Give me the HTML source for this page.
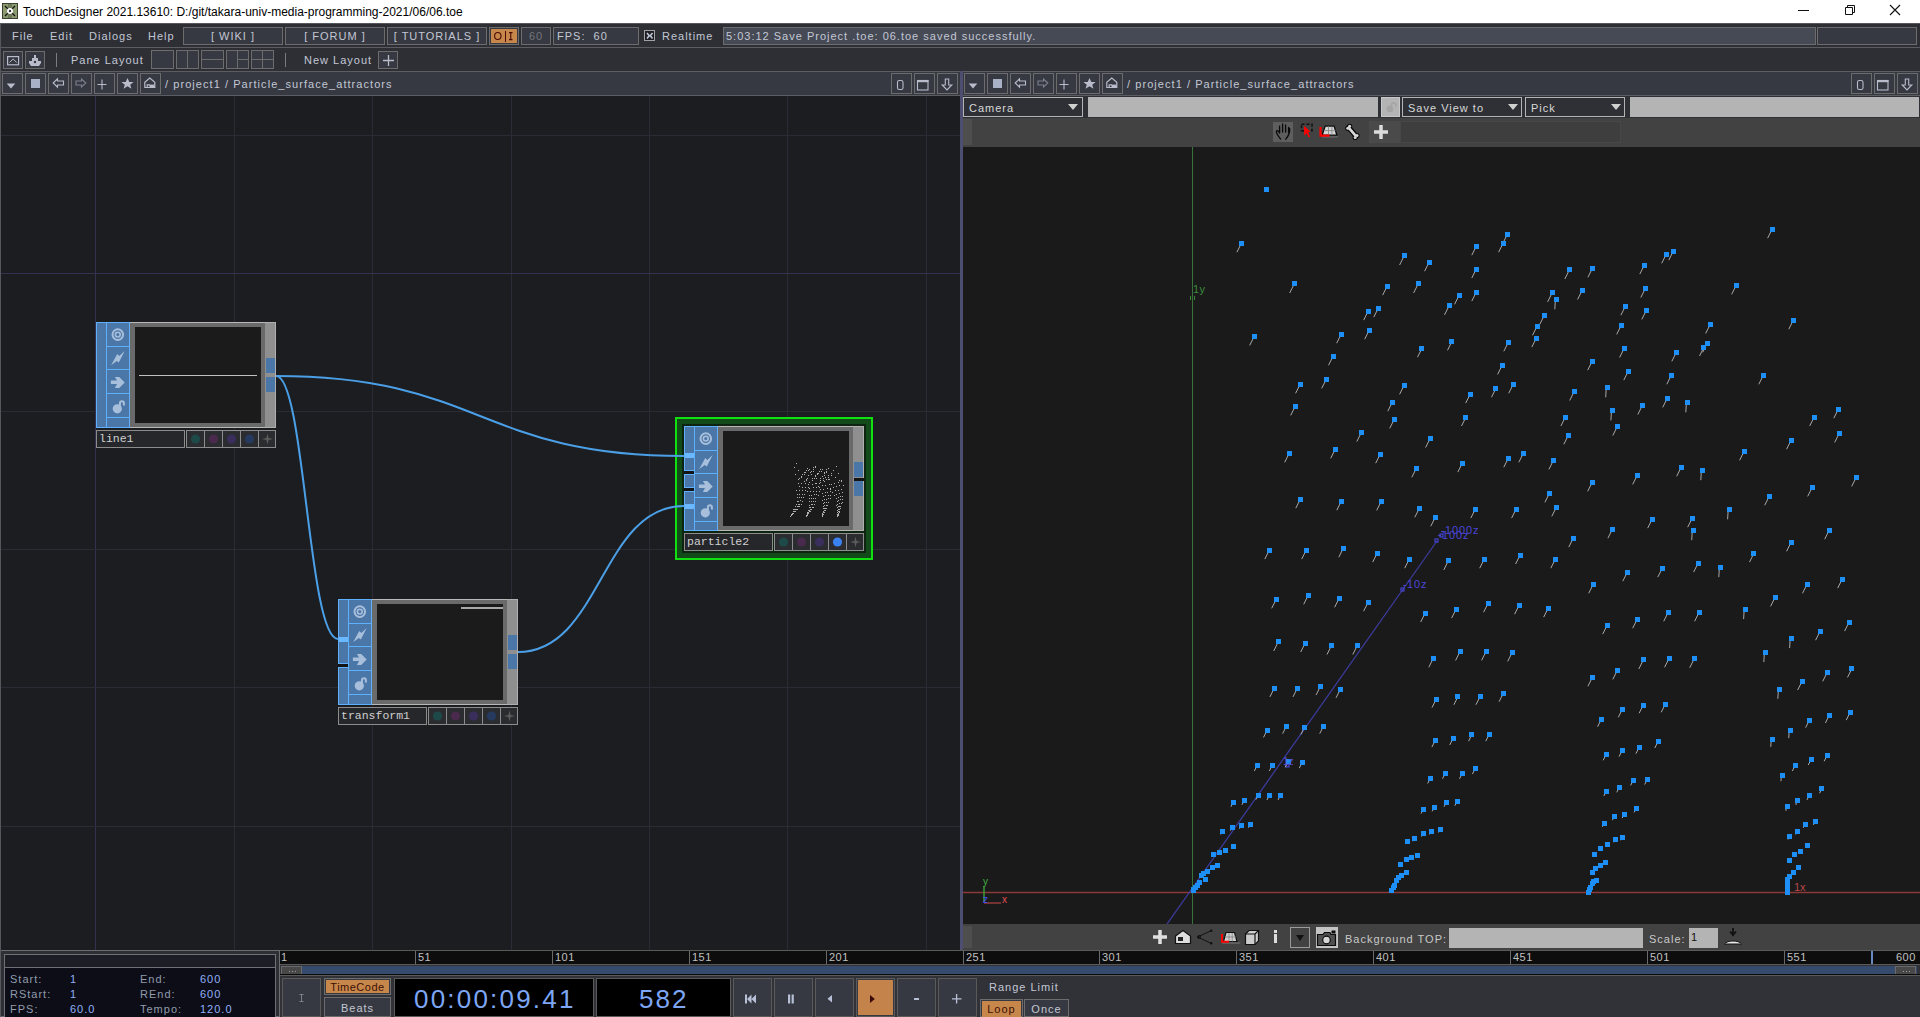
<!DOCTYPE html><html><head><meta charset="utf-8"><style>
*{margin:0;padding:0;box-sizing:border-box}
html,body{width:1920px;height:1017px;overflow:hidden;background:#1c1d21;font-family:"Liberation Sans",sans-serif;position:relative}
.a{position:absolute}
.t{position:absolute;white-space:nowrap;line-height:1}
.btn{position:absolute;border:1px solid #6c6c6c;background:#363941}
.txt{color:#c3c7d4;font-size:11px;letter-spacing:1px}
svg{position:absolute;overflow:visible}
</style></head><body><div class="a" style="left:0px;top:0px;width:1920px;height:23px;background:#fff"></div>
<svg style="left:2px;top:3px" width="16" height="16"><rect x="0.5" y="0.5" width="15" height="15" fill="#8c9a70" stroke="#3a4030"/><rect x="6" y="1" width="4" height="14" fill="#6e7a58"/><path d="M3 3L13 13M13 3L3 13" stroke="#111" stroke-width="1.3"/><circle cx="8" cy="8" r="3" fill="#fff"/><circle cx="8" cy="8" r="1.2" fill="#333"/></svg>
<div class="t " style="left:23px;top:6px;font-size:12px;color:#000;letter-spacing:0">TouchDesigner 2021.13610: D:/git/takara-univ-media-programming-2021/06/06.toe</div>
<svg style="left:1798px;top:10px" width="12" height="2"><rect width="11" height="1" fill="#111"/></svg>
<svg style="left:1843px;top:4px" width="12" height="12"><path d="M2.5 3.5h7v7h-7z M4.5 3.5V1.5h7v7h-2" fill="none" stroke="#111"/></svg>
<svg style="left:1889px;top:4px" width="12" height="12"><path d="M1 1L11 11M11 1L1 11" stroke="#111" stroke-width="1.1"/></svg>
<div class="a" style="left:0px;top:23px;width:1920px;height:24px;background:#2d2f35;border-top:1px solid #55575c"></div>
<div class="t txt" style="left:12px;top:31px;">File</div>
<div class="t txt" style="left:50px;top:31px;">Edit</div>
<div class="t txt" style="left:89px;top:31px;">Dialogs</div>
<div class="t txt" style="left:148px;top:31px;">Help</div>
<div class="btn" style="left:183px;top:27px;width:100px;height:18px;"><div class="t txt" style="left:0;width:98px;text-align:center;top:3px">[ WIKI ]</div></div>
<div class="btn" style="left:285px;top:27px;width:100px;height:18px;"><div class="t txt" style="left:0;width:98px;text-align:center;top:3px">[ FORUM ]</div></div>
<div class="btn" style="left:387px;top:27px;width:100px;height:18px;"><div class="t txt" style="left:0;width:98px;text-align:center;top:3px">[ TUTORIALS ]</div></div>
<div class="btn" style="left:489px;top:27px;width:30px;height:18px;"><div class="a" style="left:1px;top:1px;width:26px;height:14px;background:#c8874a"></div><svg style="left:4px;top:4px" width="9" height="10"><ellipse cx="3.8" cy="4" rx="3.2" ry="3.5" fill="none" stroke="#4a0a06" stroke-width="1.1"/></svg><div class="a" style="left:15px;top:3px;width:1px;height:11px;background:#4a0a06"></div><svg style="left:19px;top:4px" width="6" height="10"><path d="M0 0.6H3.5M1.75 0.6V7.6M0 7.6H3.5" stroke="#4a0a06" stroke-width="1.1"/></svg></div>
<div class="btn" style="left:521px;top:27px;width:30px;height:18px;"><div class="t txt" style="left:0;width:28px;text-align:center;top:3px;color:#72757c">60</div></div>
<div class="btn" style="left:553px;top:27px;width:86px;height:18px;"><div class="t txt" style="left:3px;top:3px">FPS:&nbsp;&nbsp;60</div></div>
<div class="a" style="left:644px;top:30px;width:11px;height:11px;border:1px solid #a0a2a8;background:#1e1f23"><svg style="left:1px;top:1px" width="8" height="8"><path d="M1 1L3 3.5H4.5L6.5 1M1 6.5L3 4H4.5L6.5 6.5" fill="none" stroke="#c0c6d8" stroke-width="1.6"/></svg></div>
<div class="t txt" style="left:662px;top:31px;">Realtime</div>
<div class="btn" style="left:723px;top:27px;width:1093px;height:18px;background:#464a55"><div class="t txt" style="left:2px;top:3px">5:03:12 Save Project .toe: 06.toe saved successfully.</div></div>
<div class="btn" style="left:1817px;top:27px;width:100px;height:18px;background:#363941"></div>
<div class="a" style="left:0px;top:47px;width:1920px;height:25px;background:#2d2f35;border-top:1px solid #5b5d62"></div>
<div class="btn" style="left:3px;top:51px;width:20px;height:18px;"><svg style="left:3px;top:4px" width="14" height="12"><rect x="0.6" y="0.6" width="11" height="8.2" fill="none" stroke="#b8bccb" stroke-width="1.2"/><path d="M2.5 6.5L6.1 3L9.7 6.5" fill="none" stroke="#b8bccb" stroke-width="1"/></svg></div>
<div class="btn" style="left:25px;top:51px;width:20px;height:18px;"><svg style="left:2px;top:2px" width="14" height="13"><path d="M6 1h2v3h2v3h3v2l-2 3H3L1 9V7h3V4h2z" fill="#b8bccb"/><circle cx="7" cy="8" r="1.2" fill="#363941"/></svg></div>
<div class="a" style="left:56px;top:53px;width:1px;height:14px;background:#7a7c84"></div>
<div class="t txt" style="left:71px;top:55px;">Pane Layout</div>
<div class="btn" style="left:151px;top:50px;width:23px;height:19px;"></div>
<div class="btn" style="left:176px;top:50px;width:23px;height:19px;"><div class="a" style="left:10px;top:0;width:1px;height:17px;background:#6c6c6c"></div></div>
<div class="btn" style="left:201px;top:50px;width:23px;height:19px;"><div class="a" style="left:0;top:8px;width:21px;height:1px;background:#6c6c6c"></div></div>
<div class="btn" style="left:226px;top:50px;width:23px;height:19px;"><div class="a" style="left:10px;top:0;width:1px;height:17px;background:#6c6c6c"></div><div class="a" style="left:10px;top:8px;width:11px;height:1px;background:#6c6c6c"></div></div>
<div class="btn" style="left:251px;top:50px;width:23px;height:19px;"><div class="a" style="left:10px;top:0;width:1px;height:17px;background:#6c6c6c"></div><div class="a" style="left:0;top:8px;width:21px;height:1px;background:#6c6c6c"></div></div>
<div class="a" style="left:285px;top:53px;width:1px;height:14px;background:#7a7c84"></div>
<div class="t txt" style="left:304px;top:55px;">New Layout</div>
<div class="btn" style="left:378px;top:51px;width:20px;height:18px;"><svg style="left:3px;top:2px" width="13" height="13"><path d="M6.5 1v11M1 6.5h11" stroke="#b8bccb" stroke-width="1.3"/></svg></div>
<div class="a" style="left:0px;top:71px;width:960px;height:25px;background:#363942;border-top:1px solid #5b5d62;border-bottom:1px solid #5b5d62"></div>
<div class="btn" style="left:2px;top:73px;width:21px;height:21px;"><svg style="left:2px;top:8px" width="12" height="8"><path d="M1.7 1.5h8.6L6 6.5z" fill="#b8bccb"/></svg></div>
<div class="btn" style="left:25px;top:73px;width:21px;height:21px;"><div class="a" style="left:5px;top:5px;width:9px;height:9px;background:#a9b1c6"></div></div>
<div class="btn" style="left:48px;top:73px;width:21px;height:21px;"><svg style="left:3px;top:4px" width="14" height="12"><path d="M1.2 5L5.5 0.8V3H11.5V7H5.5V9.2Z" fill="none" stroke="#b8bccb" stroke-width="1.1"/></svg></div>
<div class="btn" style="left:71px;top:73px;width:21px;height:21px;"><svg style="left:3px;top:4px" width="14" height="12"><path d="M10.8 5L6.5 1V3H1V7H6.5V9Z" fill="none" stroke="#7c8090" stroke-width="1.1"/></svg></div>
<div class="btn" style="left:94px;top:73px;width:21px;height:21px;"><svg style="left:2px;top:5px" width="12" height="12"><path d="M5 0.5v10M0.5 5.5h9" stroke="#b8bccb" stroke-width="1.1"/></svg></div>
<div class="btn" style="left:117px;top:73px;width:21px;height:21px;"><svg style="left:3px;top:3px" width="14" height="14"><path d="M6.5 1L8.3 5H12.6L9.2 7.7L10.5 11.8L6.5 9.3L2.5 11.8L3.8 7.7L0.4 5H4.7Z" fill="#b8bccb"/></svg></div>
<div class="btn" style="left:140px;top:73px;width:21px;height:21px;"><svg style="left:3px;top:3px" width="14" height="14"><path d="M0.8 5.2L5.8 1L10.8 5.2V10.5H0.8Z M3.2 10.5V7.8H6" fill="none" stroke="#b8bccb" stroke-width="1.2"/><rect x="5.5" y="7.6" width="5" height="2.8" fill="#b8bccb"/></svg></div>
<div class="t txt" style="left:165px;top:79px;letter-spacing:1.06px">/ project1 / Particle_surface_attractors</div>
<div class="btn" style="left:891px;top:73px;width:21px;height:21px;"><svg style="left:5px;top:6px" width="8" height="11"><rect x="0.5" y="0.5" width="5.5" height="9" rx="1.8" fill="none" stroke="#b8bccb" stroke-width="1.1"/></svg></div>
<div class="btn" style="left:914px;top:73px;width:21px;height:21px;"><svg style="left:2px;top:6px" width="13" height="12"><rect x="0.5" y="0.5" width="10.5" height="9.5" fill="none" stroke="#b8bccb" stroke-width="1.1"/><rect x="0" y="0" width="11.5" height="2.2" fill="#b8bccb"/></svg></div>
<div class="btn" style="left:937px;top:73px;width:21px;height:21px;"><svg style="left:4px;top:4px" width="12" height="14"><path d="M3.3 1H6.7V7H9.8L5 12L0.2 7H3.3Z" fill="none" stroke="#b8bccb" stroke-width="1.1"/></svg></div>
<div class="a" style="left:962px;top:71px;width:958px;height:25px;background:#363942;border-top:1px solid #5b5d62;border-bottom:1px solid #5b5d62"></div>
<div class="btn" style="left:964px;top:73px;width:21px;height:21px;"><svg style="left:2px;top:8px" width="12" height="8"><path d="M1.7 1.5h8.6L6 6.5z" fill="#b8bccb"/></svg></div>
<div class="btn" style="left:987px;top:73px;width:21px;height:21px;"><div class="a" style="left:5px;top:5px;width:9px;height:9px;background:#a9b1c6"></div></div>
<div class="btn" style="left:1010px;top:73px;width:21px;height:21px;"><svg style="left:3px;top:4px" width="14" height="12"><path d="M1.2 5L5.5 0.8V3H11.5V7H5.5V9.2Z" fill="none" stroke="#b8bccb" stroke-width="1.1"/></svg></div>
<div class="btn" style="left:1033px;top:73px;width:21px;height:21px;"><svg style="left:3px;top:4px" width="14" height="12"><path d="M10.8 5L6.5 1V3H1V7H6.5V9Z" fill="none" stroke="#7c8090" stroke-width="1.1"/></svg></div>
<div class="btn" style="left:1056px;top:73px;width:21px;height:21px;"><svg style="left:2px;top:5px" width="12" height="12"><path d="M5 0.5v10M0.5 5.5h9" stroke="#b8bccb" stroke-width="1.1"/></svg></div>
<div class="btn" style="left:1079px;top:73px;width:21px;height:21px;"><svg style="left:3px;top:3px" width="14" height="14"><path d="M6.5 1L8.3 5H12.6L9.2 7.7L10.5 11.8L6.5 9.3L2.5 11.8L3.8 7.7L0.4 5H4.7Z" fill="#b8bccb"/></svg></div>
<div class="btn" style="left:1102px;top:73px;width:21px;height:21px;"><svg style="left:3px;top:3px" width="14" height="14"><path d="M0.8 5.2L5.8 1L10.8 5.2V10.5H0.8Z M3.2 10.5V7.8H6" fill="none" stroke="#b8bccb" stroke-width="1.2"/><rect x="5.5" y="7.6" width="5" height="2.8" fill="#b8bccb"/></svg></div>
<div class="t txt" style="left:1127px;top:79px;letter-spacing:1.06px">/ project1 / Particle_surface_attractors</div>
<div class="btn" style="left:1851px;top:73px;width:21px;height:21px;"><svg style="left:5px;top:6px" width="8" height="11"><rect x="0.5" y="0.5" width="5.5" height="9" rx="1.8" fill="none" stroke="#b8bccb" stroke-width="1.1"/></svg></div>
<div class="btn" style="left:1874px;top:73px;width:21px;height:21px;"><svg style="left:2px;top:6px" width="13" height="12"><rect x="0.5" y="0.5" width="10.5" height="9.5" fill="none" stroke="#b8bccb" stroke-width="1.1"/><rect x="0" y="0" width="11.5" height="2.2" fill="#b8bccb"/></svg></div>
<div class="btn" style="left:1897px;top:73px;width:21px;height:21px;"><svg style="left:4px;top:4px" width="12" height="14"><path d="M3.3 1H6.7V7H9.8L5 12L0.2 7H3.3Z" fill="none" stroke="#b8bccb" stroke-width="1.1"/></svg></div>
<div class="a" style="left:960px;top:71px;width:3px;height:879px;background:#4e4e70"></div>
<div class="a" style="left:0;top:96px;width:960px;height:854px;background:#1c1d21;overflow:hidden">
<div class="a" style="left:95px;top:0px;width:1px;height:854px;background:#30324f"></div>
<div class="a" style="left:234px;top:0px;width:1px;height:854px;background:#2a2b34"></div>
<div class="a" style="left:372px;top:0px;width:1px;height:854px;background:#2a2b34"></div>
<div class="a" style="left:511px;top:0px;width:1px;height:854px;background:#2a2b34"></div>
<div class="a" style="left:649px;top:0px;width:1px;height:854px;background:#2a2b34"></div>
<div class="a" style="left:787px;top:0px;width:1px;height:854px;background:#2a2b34"></div>
<div class="a" style="left:926px;top:0px;width:1px;height:854px;background:#2a2b34"></div>
<div class="a" style="left:0px;top:39px;width:960px;height:1px;background:#2a2b34"></div>
<div class="a" style="left:0px;top:177px;width:960px;height:1px;background:#30324f"></div>
<div class="a" style="left:0px;top:315px;width:960px;height:1px;background:#2a2b34"></div>
<div class="a" style="left:0px;top:453px;width:960px;height:1px;background:#2a2b34"></div>
<div class="a" style="left:0px;top:591px;width:960px;height:1px;background:#2a2b34"></div>
<div class="a" style="left:0px;top:730px;width:960px;height:1px;background:#2a2b34"></div>
</div>
<div class="a" style="left:675px;top:417px;width:198px;height:143px;border:2px solid #10e010;background:#134a1a"></div>
<div class="a" style="left:682px;top:424px;width:184px;height:129px;background:#0d2410"></div>
<svg style="left:0;top:0" width="960" height="950"><g fill="none" stroke="#4b9fe6" stroke-width="2"><path d="M276 376C480 376 480 456 684 456"/><path d="M276 376C305 376 308 639 338 639"/><path d="M518 652C601 652 601 506 684 506"/></g></svg>
<div class="a" style="left:96px;top:322px;width:10px;height:106px;background:#4a76a8;border:1px solid #5fb0ff;border-right:none"></div>
<div class="a" style="left:106px;top:322px;width:24px;height:106px;background:#4a76a8;border:1px solid #5fb0ff"></div>
<div class="a" style="left:106px;top:346px;width:24px;height:1px;background:#5fb0ff"></div>
<div class="a" style="left:106px;top:369px;width:24px;height:1px;background:#5fb0ff"></div>
<div class="a" style="left:106px;top:393px;width:24px;height:1px;background:#5fb0ff"></div>
<div class="a" style="left:106px;top:417px;width:24px;height:1px;background:#5fb0ff"></div>
<svg style="left:106px;top:322px" width="24" height="100"><circle cx="11.8" cy="12.6" r="5.3" fill="none" stroke="#a8bfdb" stroke-width="2"/><circle cx="11.8" cy="12.6" r="2.4" fill="none" stroke="#a8bfdb" stroke-width="1.6"/><path d="M5.1 43.2L11.25 32L13.3 34L18.7 29.1L12.8 40.6L10.7 38.9Z" fill="#a8bfdb"/><path d="M4.9 58.6H11L8.9 55.1H13.2L18.7 60.4L13.2 65.9H8.9L11 62.1H4.9Z" fill="#a8bfdb"/><circle cx="11.3" cy="86.8" r="4.6" fill="#a8bfdb"/><path d="M13.9 84V81.2A2 2 0 0 1 17.9 81.2V83.6" fill="none" stroke="#a8bfdb" stroke-width="2"/></svg>
<div class="a" style="left:130px;top:322px;width:135px;height:106px;background:#6a6a6a;border:1px solid #b8b8b8;border-left:none;border-right:none"></div>
<div class="a" style="left:135px;top:327px;width:126px;height:96px;background:#1b1b1b"></div>

<div class="a" style="left:265px;top:322px;width:11px;height:106px;background:#8f8f8f;border:1px solid #b0b0b0;border-left:none"></div>
<div class="a" style="left:96px;top:430px;width:89px;height:18px;background:#26272b;border:1px solid #8c8c8c"></div>
<div class="t " style="left:99px;top:433px;font-family:&quot;Liberation Mono&quot;,monospace;font-size:11.5px;color:#d0d0d0;letter-spacing:0">line1</div>
<div class="a" style="left:186px;top:430px;width:90px;height:18px;background:#2b2c30;border:1px solid #8c8c8c"></div>
<svg style="left:186px;top:430px" width="18" height="18"><circle cx="9.5" cy="9" r="4.6" fill="#1d4a48"/></svg>
<div class="a" style="left:204px;top:430px;width:1px;height:18px;background:#8c8c8c"></div>
<svg style="left:204px;top:430px" width="18" height="18"><circle cx="9.5" cy="9" r="4.6" fill="#4a2a4c"/></svg>
<div class="a" style="left:222px;top:430px;width:1px;height:18px;background:#8c8c8c"></div>
<svg style="left:222px;top:430px" width="18" height="18"><circle cx="9.5" cy="9" r="4.6" fill="#3a2f5c"/></svg>
<div class="a" style="left:240px;top:430px;width:1px;height:18px;background:#8c8c8c"></div>
<svg style="left:240px;top:430px" width="18" height="18"><circle cx="9.5" cy="9" r="4.6" fill="#263a60"/></svg>
<div class="a" style="left:258px;top:430px;width:1px;height:18px;background:#8c8c8c"></div>
<svg style="left:258px;top:430px" width="18" height="18"><path d="M9.5 3.5L10.6 7.9L15 9L10.6 10.1L9.5 14.5L8.4 10.1L4 9L8.4 7.9Z" fill="#5c5c5c"/></svg>
<div class="a" style="left:266px;top:358px;width:9px;height:15px;background:#4a76a8"></div>
<div class="a" style="left:266px;top:377px;width:9px;height:15px;background:#4a76a8"></div>
<div class="a" style="left:139px;top:375px;width:118px;height:1px;background:#c0c0c0"></div>
<div class="a" style="left:338px;top:599px;width:10px;height:106px;background:#4a76a8;border:1px solid #5fb0ff;border-right:none"></div>
<div class="a" style="left:339px;top:637px;width:10px;height:5px;background:#6ab8ff"></div>
<div class="a" style="left:338px;top:664px;width:11px;height:3px;background:#141414"></div>
<div class="a" style="left:338px;top:663px;width:11px;height:1px;background:#5fb0ff"></div>
<div class="a" style="left:338px;top:667px;width:11px;height:1px;background:#5fb0ff"></div>
<div class="a" style="left:348px;top:599px;width:24px;height:106px;background:#4a76a8;border:1px solid #5fb0ff"></div>
<div class="a" style="left:348px;top:623px;width:24px;height:1px;background:#5fb0ff"></div>
<div class="a" style="left:348px;top:646px;width:24px;height:1px;background:#5fb0ff"></div>
<div class="a" style="left:348px;top:670px;width:24px;height:1px;background:#5fb0ff"></div>
<div class="a" style="left:348px;top:694px;width:24px;height:1px;background:#5fb0ff"></div>
<svg style="left:348px;top:599px" width="24" height="100"><circle cx="11.8" cy="12.6" r="5.3" fill="none" stroke="#a8bfdb" stroke-width="2"/><circle cx="11.8" cy="12.6" r="2.4" fill="none" stroke="#a8bfdb" stroke-width="1.6"/><path d="M5.1 43.2L11.25 32L13.3 34L18.7 29.1L12.8 40.6L10.7 38.9Z" fill="#a8bfdb"/><path d="M4.9 58.6H11L8.9 55.1H13.2L18.7 60.4L13.2 65.9H8.9L11 62.1H4.9Z" fill="#a8bfdb"/><circle cx="11.3" cy="86.8" r="4.6" fill="#a8bfdb"/><path d="M13.9 84V81.2A2 2 0 0 1 17.9 81.2V83.6" fill="none" stroke="#a8bfdb" stroke-width="2"/></svg>
<div class="a" style="left:372px;top:599px;width:135px;height:106px;background:#6a6a6a;border:1px solid #b8b8b8;border-left:none;border-right:none"></div>
<div class="a" style="left:377px;top:604px;width:126px;height:96px;background:#1b1b1b"></div>

<div class="a" style="left:507px;top:599px;width:11px;height:106px;background:#8f8f8f;border:1px solid #b0b0b0;border-left:none"></div>
<div class="a" style="left:338px;top:707px;width:89px;height:18px;background:#26272b;border:1px solid #8c8c8c"></div>
<div class="t " style="left:341px;top:710px;font-family:&quot;Liberation Mono&quot;,monospace;font-size:11.5px;color:#d0d0d0;letter-spacing:0">transform1</div>
<div class="a" style="left:428px;top:707px;width:90px;height:18px;background:#2b2c30;border:1px solid #8c8c8c"></div>
<svg style="left:428px;top:707px" width="18" height="18"><circle cx="9.5" cy="9" r="4.6" fill="#1d4a48"/></svg>
<div class="a" style="left:446px;top:707px;width:1px;height:18px;background:#8c8c8c"></div>
<svg style="left:446px;top:707px" width="18" height="18"><circle cx="9.5" cy="9" r="4.6" fill="#4a2a4c"/></svg>
<div class="a" style="left:464px;top:707px;width:1px;height:18px;background:#8c8c8c"></div>
<svg style="left:464px;top:707px" width="18" height="18"><circle cx="9.5" cy="9" r="4.6" fill="#3a2f5c"/></svg>
<div class="a" style="left:482px;top:707px;width:1px;height:18px;background:#8c8c8c"></div>
<svg style="left:482px;top:707px" width="18" height="18"><circle cx="9.5" cy="9" r="4.6" fill="#263a60"/></svg>
<div class="a" style="left:500px;top:707px;width:1px;height:18px;background:#8c8c8c"></div>
<svg style="left:500px;top:707px" width="18" height="18"><path d="M9.5 3.5L10.6 7.9L15 9L10.6 10.1L9.5 14.5L8.4 10.1L4 9L8.4 7.9Z" fill="#5c5c5c"/></svg>
<div class="a" style="left:508px;top:635px;width:9px;height:15px;background:#4a76a8"></div>
<div class="a" style="left:508px;top:654px;width:9px;height:15px;background:#4a76a8"></div>
<div class="a" style="left:461px;top:607px;width:42px;height:2px;background:#a8a8a8"></div>
<div class="a" style="left:684px;top:426px;width:10px;height:105px;background:#4a76a8;border:1px solid #5fb0ff;border-right:none"></div>
<div class="a" style="left:685px;top:453px;width:10px;height:5px;background:#6ab8ff"></div>
<div class="a" style="left:684px;top:471px;width:11px;height:3px;background:#141414"></div>
<div class="a" style="left:684px;top:470px;width:11px;height:1px;background:#5fb0ff"></div>
<div class="a" style="left:684px;top:474px;width:11px;height:1px;background:#5fb0ff"></div>
<div class="a" style="left:684px;top:488px;width:11px;height:3px;background:#141414"></div>
<div class="a" style="left:684px;top:487px;width:11px;height:1px;background:#5fb0ff"></div>
<div class="a" style="left:684px;top:491px;width:11px;height:1px;background:#5fb0ff"></div>
<div class="a" style="left:685px;top:504px;width:10px;height:5px;background:#6ab8ff"></div>
<div class="a" style="left:694px;top:426px;width:24px;height:105px;background:#4a76a8;border:1px solid #5fb0ff"></div>
<div class="a" style="left:694px;top:450px;width:24px;height:1px;background:#5fb0ff"></div>
<div class="a" style="left:694px;top:473px;width:24px;height:1px;background:#5fb0ff"></div>
<div class="a" style="left:694px;top:497px;width:24px;height:1px;background:#5fb0ff"></div>
<div class="a" style="left:694px;top:521px;width:24px;height:1px;background:#5fb0ff"></div>
<svg style="left:694px;top:426px" width="24" height="100"><circle cx="11.8" cy="12.6" r="5.3" fill="none" stroke="#a8bfdb" stroke-width="2"/><circle cx="11.8" cy="12.6" r="2.4" fill="none" stroke="#a8bfdb" stroke-width="1.6"/><path d="M5.1 43.2L11.25 32L13.3 34L18.7 29.1L12.8 40.6L10.7 38.9Z" fill="#a8bfdb"/><path d="M4.9 58.6H11L8.9 55.1H13.2L18.7 60.4L13.2 65.9H8.9L11 62.1H4.9Z" fill="#a8bfdb"/><circle cx="11.3" cy="86.8" r="4.6" fill="#a8bfdb"/><path d="M13.9 84V81.2A2 2 0 0 1 17.9 81.2V83.6" fill="none" stroke="#a8bfdb" stroke-width="2"/></svg>
<div class="a" style="left:718px;top:426px;width:135px;height:105px;background:#6a6a6a;border:1px solid #b8b8b8;border-left:none;border-right:none"></div>
<div class="a" style="left:723px;top:431px;width:126px;height:95px;background:#1b1b1b"></div>

<div class="a" style="left:853px;top:426px;width:11px;height:105px;background:#8f8f8f;border:1px solid #b0b0b0;border-left:none"></div>
<div class="a" style="left:684px;top:533px;width:89px;height:18px;background:#26272b;border:1px solid #8c8c8c"></div>
<div class="t " style="left:687px;top:536px;font-family:&quot;Liberation Mono&quot;,monospace;font-size:11.5px;color:#d0d0d0;letter-spacing:0">particle2</div>
<div class="a" style="left:774px;top:533px;width:90px;height:18px;background:#2b2c30;border:1px solid #8c8c8c"></div>
<svg style="left:774px;top:533px" width="18" height="18"><circle cx="9.5" cy="9" r="4.6" fill="#1d4a48"/></svg>
<div class="a" style="left:792px;top:533px;width:1px;height:18px;background:#8c8c8c"></div>
<svg style="left:792px;top:533px" width="18" height="18"><circle cx="9.5" cy="9" r="4.6" fill="#4a2a4c"/></svg>
<div class="a" style="left:810px;top:533px;width:1px;height:18px;background:#8c8c8c"></div>
<svg style="left:810px;top:533px" width="18" height="18"><circle cx="9.5" cy="9" r="4.6" fill="#3a2f5c"/></svg>
<div class="a" style="left:828px;top:533px;width:1px;height:18px;background:#8c8c8c"></div>
<svg style="left:828px;top:533px" width="18" height="18"><circle cx="9.5" cy="9" r="4.6" fill="#3a82f0"/></svg>
<div class="a" style="left:846px;top:533px;width:1px;height:18px;background:#8c8c8c"></div>
<svg style="left:846px;top:533px" width="18" height="18"><path d="M9.5 3.5L10.6 7.9L15 9L10.6 10.1L9.5 14.5L8.4 10.1L4 9L8.4 7.9Z" fill="#5c5c5c"/></svg>
<div class="a" style="left:854px;top:462px;width:9px;height:15px;background:#4a76a8"></div>
<div class="a" style="left:854px;top:481px;width:9px;height:15px;background:#4a76a8"></div>
<div class="a" style="left:854px;top:478px;width:10px;height:3px;background:#141414"></div>
<svg style="left:723px;top:431px" width="126" height="96"><g fill="#b0b0b0"><rect x="73" y="32" width="1" height="1"/><rect x="71" y="36" width="1" height="1"/><rect x="92" y="35" width="1" height="1"/><rect x="92" y="36" width="1" height="1"/><rect x="90" y="36" width="1" height="1"/><rect x="84" y="37" width="1" height="1"/><rect x="86" y="38" width="1" height="1"/><rect x="90" y="38" width="1" height="1"/><rect x="75" y="39" width="1" height="1"/><rect x="83" y="39" width="1" height="1"/><rect x="85" y="39" width="1" height="1"/><rect x="88" y="40" width="1" height="1"/><rect x="90" y="40" width="1" height="1"/><rect x="87" y="41" width="1" height="1"/><rect x="81" y="41" width="1" height="1"/><rect x="82" y="41" width="1" height="1"/><rect x="72" y="43" width="1" height="1"/><rect x="79" y="43" width="1" height="1"/><rect x="81" y="43" width="1" height="1"/><rect x="88" y="43" width="1" height="1"/><rect x="85" y="44" width="1" height="1"/><rect x="92" y="44" width="1" height="1"/><rect x="94" y="42" width="1" height="1"/><rect x="94" y="43" width="1" height="1"/><rect x="78" y="45" width="1" height="1"/><rect x="92" y="45" width="1" height="1"/><rect x="76" y="47" width="1" height="1"/><rect x="78" y="46" width="1" height="1"/><rect x="84" y="47" width="1" height="1"/><rect x="93" y="47" width="1" height="1"/><rect x="91" y="47" width="1" height="1"/><rect x="89" y="47" width="1" height="1"/><rect x="75" y="48" width="1" height="1"/><rect x="83" y="48" width="1" height="1"/><rect x="89" y="49" width="1" height="1"/><rect x="83" y="49" width="1" height="1"/><rect x="113" y="35" width="1" height="1"/><rect x="105" y="37" width="1" height="1"/><rect x="97" y="38" width="1" height="1"/><rect x="99" y="38" width="1" height="1"/><rect x="103" y="38" width="1" height="1"/><rect x="96" y="40" width="1" height="1"/><rect x="98" y="40" width="1" height="1"/><rect x="103" y="40" width="1" height="1"/><rect x="110" y="39" width="1" height="1"/><rect x="95" y="42" width="1" height="1"/><rect x="101" y="41" width="1" height="1"/><rect x="103" y="41" width="1" height="1"/><rect x="101" y="42" width="1" height="1"/><rect x="108" y="42" width="1" height="1"/><rect x="115" y="42" width="1" height="1"/><rect x="108" y="44" width="1" height="1"/><rect x="101" y="44" width="1" height="1"/><rect x="105" y="44" width="1" height="1"/><rect x="99" y="45" width="1" height="1"/><rect x="102" y="46" width="1" height="1"/><rect x="105" y="46" width="1" height="1"/><rect x="112" y="46" width="1" height="1"/><rect x="97" y="47" width="1" height="1"/><rect x="100" y="47" width="1" height="1"/><rect x="105" y="48" width="1" height="1"/><rect x="106" y="48" width="1" height="1"/><rect x="103" y="48" width="1" height="1"/><rect x="100" y="49" width="1" height="1"/><rect x="97" y="49" width="1" height="1"/><rect x="116" y="49" width="1" height="1"/><rect x="118" y="49" width="1" height="1"/><rect x="81" y="50" width="1" height="1"/><rect x="86" y="51" width="1" height="1"/><rect x="75" y="52" width="1" height="1"/><rect x="78" y="52" width="1" height="1"/><rect x="82" y="52" width="1" height="1"/><rect x="85" y="53" width="1" height="1"/><rect x="89" y="53" width="1" height="1"/><rect x="92" y="52" width="1" height="1"/><rect x="93" y="52" width="1" height="1"/><rect x="76" y="55" width="1" height="1"/><rect x="79" y="56" width="1" height="1"/><rect x="82" y="56" width="1" height="1"/><rect x="85" y="56" width="1" height="1"/><rect x="86" y="57" width="1" height="1"/><rect x="90" y="56" width="1" height="1"/><rect x="93" y="56" width="1" height="1"/><rect x="73" y="59" width="1" height="1"/><rect x="76" y="59" width="1" height="1"/><rect x="79" y="59" width="1" height="1"/><rect x="82" y="59" width="1" height="1"/><rect x="84" y="60" width="1" height="1"/><rect x="87" y="60" width="1" height="1"/><rect x="90" y="60" width="1" height="1"/><rect x="93" y="60" width="1" height="1"/><rect x="74" y="63" width="1" height="1"/><rect x="76" y="63" width="1" height="1"/><rect x="79" y="63" width="1" height="1"/><rect x="81" y="63" width="1" height="1"/><rect x="86" y="64" width="1" height="1"/><rect x="88" y="64" width="1" height="1"/><rect x="91" y="63" width="1" height="1"/><rect x="93" y="63" width="1" height="1"/><rect x="74" y="66" width="1" height="1"/><rect x="76" y="66" width="1" height="1"/><rect x="78" y="66" width="1" height="1"/><rect x="80" y="66" width="1" height="1"/><rect x="86" y="67" width="1" height="1"/><rect x="88" y="67" width="1" height="1"/><rect x="90" y="67" width="1" height="1"/><rect x="92" y="67" width="1" height="1"/><rect x="101" y="50" width="1" height="1"/><rect x="97" y="51" width="1" height="1"/><rect x="118" y="50" width="1" height="1"/><rect x="115" y="51" width="1" height="1"/><rect x="111" y="52" width="1" height="1"/><rect x="96" y="52" width="1" height="1"/><rect x="106" y="53" width="1" height="1"/><rect x="108" y="53" width="1" height="1"/><rect x="102" y="54" width="1" height="1"/><rect x="99" y="54" width="1" height="1"/><rect x="120" y="54" width="1" height="1"/><rect x="116" y="54" width="1" height="1"/><rect x="95" y="55" width="1" height="1"/><rect x="113" y="55" width="1" height="1"/><rect x="96" y="56" width="1" height="1"/><rect x="110" y="56" width="1" height="1"/><rect x="104" y="57" width="1" height="1"/><rect x="107" y="57" width="1" height="1"/><rect x="100" y="58" width="1" height="1"/><rect x="107" y="58" width="1" height="1"/><rect x="118" y="58" width="1" height="1"/><rect x="97" y="58" width="1" height="1"/><rect x="115" y="59" width="1" height="1"/><rect x="112" y="59" width="1" height="1"/><rect x="96" y="60" width="1" height="1"/><rect x="107" y="60" width="1" height="1"/><rect x="104" y="61" width="1" height="1"/><rect x="109" y="61" width="1" height="1"/><rect x="102" y="61" width="1" height="1"/><rect x="99" y="62" width="1" height="1"/><rect x="119" y="61" width="1" height="1"/><rect x="116" y="62" width="1" height="1"/><rect x="113" y="63" width="1" height="1"/><rect x="95" y="64" width="1" height="1"/><rect x="111" y="64" width="1" height="1"/><rect x="105" y="64" width="1" height="1"/><rect x="107" y="64" width="1" height="1"/><rect x="102" y="64" width="1" height="1"/><rect x="100" y="65" width="1" height="1"/><rect x="119" y="65" width="1" height="1"/><rect x="117" y="65" width="1" height="1"/><rect x="115" y="66" width="1" height="1"/><rect x="113" y="67" width="1" height="1"/><rect x="103" y="68" width="1" height="1"/><rect x="105" y="67" width="1" height="1"/><rect x="107" y="67" width="1" height="1"/><rect x="74" y="70" width="1" height="1"/><rect x="75" y="70" width="1" height="1"/><rect x="77" y="69" width="1" height="1"/><rect x="79" y="70" width="1" height="1"/><rect x="73" y="73" width="1" height="1"/><rect x="75" y="73" width="1" height="1"/><rect x="76" y="73" width="1" height="1"/><rect x="78" y="73" width="1" height="1"/><rect x="72" y="75" width="1" height="1"/><rect x="74" y="75" width="1" height="1"/><rect x="75" y="75" width="1" height="1"/><rect x="76" y="75" width="1" height="1"/><rect x="70" y="78" width="1" height="1"/><rect x="71" y="78" width="1" height="1"/><rect x="72" y="78" width="1" height="1"/><rect x="73" y="78" width="1" height="1"/><rect x="74" y="78" width="1" height="1"/><rect x="70" y="80" width="1" height="1"/><rect x="71" y="80" width="1" height="1"/><rect x="72" y="80" width="1" height="1"/><rect x="69" y="82" width="1" height="1"/><rect x="70" y="82" width="1" height="1"/><rect x="68" y="84" width="1" height="1"/><rect x="68" y="83" width="1" height="1"/><rect x="69" y="83" width="1" height="1"/><rect x="67" y="85" width="1" height="1"/><rect x="86" y="70" width="1" height="1"/><rect x="88" y="70" width="1" height="1"/><rect x="90" y="70" width="1" height="1"/><rect x="92" y="70" width="1" height="1"/><rect x="86" y="74" width="1" height="1"/><rect x="88" y="73" width="1" height="1"/><rect x="89" y="73" width="1" height="1"/><rect x="91" y="73" width="1" height="1"/><rect x="86" y="76" width="1" height="1"/><rect x="87" y="76" width="1" height="1"/><rect x="89" y="76" width="1" height="1"/><rect x="90" y="76" width="1" height="1"/><rect x="85" y="79" width="1" height="1"/><rect x="86" y="79" width="1" height="1"/><rect x="87" y="78" width="1" height="1"/><rect x="88" y="78" width="1" height="1"/><rect x="84" y="81" width="1" height="1"/><rect x="85" y="81" width="1" height="1"/><rect x="86" y="80" width="1" height="1"/><rect x="87" y="80" width="1" height="1"/><rect x="84" y="83" width="1" height="1"/><rect x="84" y="82" width="1" height="1"/><rect x="85" y="82" width="1" height="1"/><rect x="84" y="84" width="1" height="1"/><rect x="83" y="84" width="1" height="1"/><rect x="83" y="85" width="1" height="1"/><rect x="99" y="69" width="1" height="1"/><rect x="101" y="68" width="1" height="1"/><rect x="100" y="72" width="1" height="1"/><rect x="101" y="71" width="1" height="1"/><rect x="103" y="71" width="1" height="1"/><rect x="105" y="71" width="1" height="1"/><rect x="100" y="75" width="1" height="1"/><rect x="101" y="74" width="1" height="1"/><rect x="103" y="74" width="1" height="1"/><rect x="104" y="74" width="1" height="1"/><rect x="100" y="77" width="1" height="1"/><rect x="101" y="77" width="1" height="1"/><rect x="102" y="77" width="1" height="1"/><rect x="103" y="77" width="1" height="1"/><rect x="100" y="80" width="1" height="1"/><rect x="101" y="79" width="1" height="1"/><rect x="102" y="79" width="1" height="1"/><rect x="99" y="82" width="1" height="1"/><rect x="100" y="81" width="1" height="1"/><rect x="101" y="81" width="1" height="1"/><rect x="99" y="84" width="1" height="1"/><rect x="99" y="83" width="1" height="1"/><rect x="100" y="83" width="1" height="1"/><rect x="99" y="85" width="1" height="1"/><rect x="114" y="70" width="1" height="1"/><rect x="115" y="69" width="1" height="1"/><rect x="117" y="68" width="1" height="1"/><rect x="119" y="68" width="1" height="1"/><rect x="113" y="74" width="1" height="1"/><rect x="114" y="73" width="1" height="1"/><rect x="116" y="72" width="1" height="1"/><rect x="118" y="72" width="1" height="1"/><rect x="119" y="71" width="1" height="1"/><rect x="114" y="76" width="1" height="1"/><rect x="115" y="75" width="1" height="1"/><rect x="116" y="75" width="1" height="1"/><rect x="117" y="75" width="1" height="1"/><rect x="114" y="79" width="1" height="1"/><rect x="115" y="78" width="1" height="1"/><rect x="116" y="78" width="1" height="1"/><rect x="117" y="77" width="1" height="1"/><rect x="114" y="81" width="1" height="1"/><rect x="115" y="80" width="1" height="1"/><rect x="116" y="80" width="1" height="1"/><rect x="114" y="83" width="1" height="1"/><rect x="115" y="82" width="1" height="1"/><rect x="116" y="81" width="1" height="1"/><rect x="115" y="83" width="1" height="1"/><rect x="115" y="84" width="1" height="1"/><rect x="114" y="84" width="1" height="1"/><rect x="114" y="85" width="1" height="1"/></g></svg>
<div class="a" style="left:963px;top:96px;width:957px;height:854px;background:#2f3035"></div>
<div class="a" style="left:963px;top:97px;width:120px;height:20px;border:1px solid #b4b4b4;background:#2f3035"></div>
<div class="t txt" style="left:969px;top:103px;color:#d8d8d8;letter-spacing:1px">Camera</div>
<svg style="left:1068px;top:104px" width="10" height="6"><path d="M0 0h10L5 6z" fill="#d0d0d0"/></svg>
<div class="a" style="left:1088px;top:97px;width:290px;height:20px;background:#b4b4b4"></div>
<div class="a" style="left:1381px;top:97px;width:19px;height:20px;background:#b4b4b4;border:1px solid #c8c8c8"></div>
<svg style="left:1384px;top:100px" width="14" height="14"><circle cx="6" cy="9" r="3.3" fill="#a4a4a4"/><path d="M7.5 6V4.5A2.3 2.3 0 0 1 12 4.5V6.5" fill="none" stroke="#a4a4a4" stroke-width="1.6"/></svg>
<div class="a" style="left:1402px;top:97px;width:120px;height:20px;border:1px solid #b4b4b4;background:#2f3035"></div>
<div class="t txt" style="left:1408px;top:103px;color:#d8d8d8;letter-spacing:1px">Save View to</div>
<svg style="left:1508px;top:104px" width="10" height="6"><path d="M0 0h10L5 6z" fill="#d0d0d0"/></svg>
<div class="a" style="left:1525px;top:97px;width:100px;height:20px;border:1px solid #b4b4b4;background:#2f3035"></div>
<div class="t txt" style="left:1531px;top:103px;color:#d8d8d8;letter-spacing:1px">Pick</div>
<svg style="left:1611px;top:104px" width="10" height="6"><path d="M0 0h10L5 6z" fill="#d0d0d0"/></svg>
<div class="a" style="left:1630px;top:97px;width:289px;height:20px;background:#b4b4b4"></div>
<div class="a" style="left:963px;top:118px;width:957px;height:29px;background:#424242"></div>
<div class="a" style="left:963px;top:119px;width:9px;height:26px;background:#4e4e4e"></div>
<div class="a" style="left:1273px;top:122px;width:20px;height:20px;background:#5e5e5e"></div>
<div class="a" style="left:1369px;top:121px;width:252px;height:22px;background:#4a4a4a"></div>
<div class="a" style="left:1400px;top:121px;width:221px;height:22px;background:#3e3e3e;border:1px solid #474747"></div>
<svg style="left:1270px;top:118px" width="100" height="30"><path d="M10.5 21C8.5 18.5 6 15.5 6.5 13.2C7 12 8.5 12.5 9.6 15M9.6 15V8.2M12.6 14V5.8M15.6 14V6.8M18.6 14.5V9.5M19.6 10.5C20.2 14.5 18 18.5 15.8 21.2" fill="none" stroke="#0a0a0a" stroke-width="1.3" stroke-linecap="round"/><rect x="31.5" y="6.2" width="10.5" height="6.5" fill="none" stroke="#111" stroke-width="1.6" stroke-dasharray="3 2"/><path d="M34 7.8L40.5 13.8L38.2 14.3L40.2 18.8L38.6 19.5L36.6 15.2L34.2 17.8Z" fill="#ff0000"/><path d="M52 17.7H69L67 19.8H52Z" fill="#5e5e5e"/><path d="M52.1 17.2L55.2 8.1H64.1L66.9 17.2Z" fill="#d4d4d4" stroke="#0a0a0a" stroke-width="1.3"/><path d="M58.5 8.5V17M61.9 8.5V17M54 12.6H65.5" stroke="#8a8a8a" stroke-width="0.9"/><path d="M50.5 9V17.6H59.5" fill="none" stroke="#ff0000" stroke-width="2.2"/><g stroke="#0a0a0a" stroke-width="5.2" stroke-linecap="round"><path d="M79.3 10.3L85.3 17.3"/></g><g fill="#0a0a0a"><circle cx="77.8" cy="10.2" r="2.6"/><circle cx="79.6" cy="8.3" r="2.6"/><circle cx="87" cy="17.5" r="2.6"/><circle cx="85.2" cy="19.4" r="2.6"/></g><g stroke="#d8d8d8" stroke-width="2.6" stroke-linecap="round"><path d="M79.3 10.3L85.3 17.3"/></g><g fill="#d8d8d8"><circle cx="77.8" cy="10.2" r="1.5"/><circle cx="79.6" cy="8.3" r="1.5"/><circle cx="87" cy="17.5" r="1.5"/><circle cx="85.2" cy="19.4" r="1.5"/></g></svg>
<svg style="left:1372px;top:123px" width="18" height="18"><path d="M9 2V16M2 9H16" stroke="#dcdcdc" stroke-width="3.5"/></svg>
<div class="a" style="left:963px;top:147px;width:957px;height:777px;background:#1a1a1a;overflow:hidden">
<svg style="left:0;top:0" width="957" height="777">
<line x1="229.5" y1="0" x2="229.5" y2="777" stroke="#37733a" stroke-width="1"/>
<path d="M227.5 149v4M231.5 149v4" stroke="#3a8a3a" stroke-width="1"/>
<line x1="0" y1="745.5" x2="957" y2="745.5" stroke="#8a3838" stroke-width="1.6"/>
<line x1="204" y1="777" x2="474" y2="394" stroke="#3b3b9c" stroke-width="1.3"/>
<g fill="none" stroke="#4545d0" stroke-width="1.2"><rect x="472" y="392" width="3" height="3"/><rect x="477" y="387" width="3" height="3"/><rect x="438" y="441" width="3" height="3"/><rect x="323" y="617" width="3" height="3"/></g>
<path d="M478 384.5h3M475 388.5h3M440 438.5h3" stroke="#4545d0" stroke-width="1"/>
<path d="M277.4 98.2l-3.50 7.00M543.3 89.4l-3.50 7.00M539.1 98.2l-3.50 7.00M512.3 101.2l-3.50 7.00M440.1 111.0l-3.50 7.00M465.1 117.2l-3.50 7.00M512.3 124.0l-3.50 7.00M330.2 139.0l-3.50 7.00M423.1 141.2l-3.50 7.00M454.1 139.0l-3.50 7.00M495.1 150.3l-3.50 7.00M512.3 147.1l-3.50 7.00M485.0 160.9l-3.50 7.00M404.2 166.1l-3.50 7.00M414.3 163.1l-3.50 7.00M290.2 191.4l-3.50 7.00M377.2 189.2l-3.50 7.00M405.2 185.2l-3.50 7.00M488.0 196.3l-3.50 7.00M458.0 203.2l-3.50 7.00M544.3 197.3l-3.50 7.00M573.0 181.3l-3.50 7.00M572.3 193.1l-3.50 7.00M369.0 211.3l-3.50 7.00M538.1 220.4l-3.50 7.00M336.1 239.3l-3.50 7.00M362.2 234.4l-3.50 7.00M440.1 240.3l-3.50 7.00M549.2 239.3l-3.50 7.00M532.0 243.2l-3.50 7.00M506.2 249.1l-3.50 7.00M331.2 261.4l-3.50 7.00M428.3 257.2l-3.50 7.00M502.0 272.0l-3.50 7.00M430.2 274.4l-3.50 7.00M808.1 84.2l-3.50 7.00M709.3 106.1l-3.50 7.00M702.2 109.3l-3.50 7.00M605.3 125.0l-3.50 7.00M628.4 123.3l-3.50 7.00M680.3 120.1l-3.50 7.00M588.1 147.9l-3.50 7.00M592.3 154.3l-0.50 8.00M618.1 145.5l-3.50 7.00M681.3 143.5l-3.50 7.00M772.2 140.3l-3.50 7.00M580.3 170.3l-3.50 7.00M661.4 161.2l-3.50 7.00M682.3 165.4l-3.50 7.00M657.2 180.4l-3.50 7.00M746.2 179.4l-3.50 7.00M829.3 175.2l-3.50 7.00M743.2 198.3l-3.50 7.00M740.0 202.0l-3.50 7.00M660.1 203.5l-3.50 7.00M712.3 207.4l-3.50 7.00M628.2 216.2l-3.50 7.00M664.3 226.1l-3.50 7.00M707.3 230.3l-3.50 7.00M799.3 230.3l-3.50 7.00M610.2 246.5l-3.50 7.00M643.2 242.3l-0.50 8.00M703.2 253.4l-3.50 7.00M723.3 257.3l-0.50 8.00M678.3 260.5l-3.50 7.00M648.4 265.4l-0.50 8.00M601.4 272.0l-3.50 7.00M850.2 272.0l-3.50 7.00M874.3 264.2l-3.50 7.00M397.3 287.6l-3.50 7.00M466.1 293.5l-3.50 7.00M325.2 308.3l-3.50 7.00M371.2 304.3l-3.50 7.00M416.2 309.2l-3.50 7.00M452.3 323.3l-3.50 7.00M498.3 318.1l-3.50 7.00M544.3 313.2l-3.50 7.00M559.3 308.3l-3.50 7.00M336.3 354.2l-3.50 7.00M377.3 356.2l-3.50 7.00M417.2 356.4l-3.50 7.00M455.3 363.3l-3.50 7.00M471.3 372.2l-3.50 7.00M511.3 364.1l-3.50 7.00M552.1 364.1l-3.50 7.00M305.3 405.1l-3.50 7.00M342.2 405.1l-3.50 7.00M379.3 403.2l-3.50 7.00M413.2 408.1l-3.50 7.00M445.2 414.2l-3.50 7.00M484.3 415.9l-3.50 7.00M520.2 414.2l-3.50 7.00M556.1 410.0l-3.50 7.00M312.2 454.3l-3.50 7.00M344.2 450.3l-3.50 7.00M375.1 453.3l-3.50 7.00M404.1 457.2l-3.50 7.00M461.2 468.0l-3.50 7.00M492.1 464.1l-3.50 7.00M524.1 458.2l-3.50 7.00M555.1 460.2l-3.50 7.00M314.2 497.0l-3.50 7.00M341.2 498.0l-3.50 7.00M367.5 500.5l-3.50 7.00M393.3 500.5l-3.50 7.00M469.3 513.3l-3.50 7.00M496.1 506.4l-3.50 7.00M522.1 506.4l-3.50 7.00M548.2 507.4l-3.50 7.00M653.3 281.5l-3.50 7.00M604.3 290.3l-3.50 7.00M875.2 288.4l-3.50 7.00M827.1 295.2l-3.50 7.00M780.1 306.3l-3.50 7.00M589.4 315.4l-3.50 7.00M717.2 322.3l-3.50 7.00M738.3 325.2l-0.50 8.00M673.2 330.4l-3.50 7.00M628.2 337.3l-3.50 7.00M892.2 332.4l-3.50 7.00M848.2 342.4l-3.50 7.00M585.4 348.3l-3.50 7.00M805.2 351.3l-3.50 7.00M592.3 362.3l-3.50 7.00M765.1 364.3l-0.50 8.00M688.2 374.1l-3.50 7.00M728.2 373.2l-3.50 7.00M648.4 384.2l-3.50 7.00M729.2 385.2l-0.50 8.00M865.2 385.2l-3.50 7.00M609.3 393.1l-3.50 7.00M827.1 397.3l-3.50 7.00M790.0 408.1l-3.50 7.00M591.3 414.2l-3.50 7.00M734.1 418.1l-3.50 7.00M698.3 423.1l-3.50 7.00M756.3 422.1l-0.50 8.00M663.3 427.2l-3.50 7.00M629.2 439.3l-3.50 7.00M878.2 434.1l-3.50 7.00M843.0 439.3l-3.50 7.00M811.1 452.3l-3.50 7.00M584.2 463.1l-3.50 7.00M781.1 464.1l-0.50 8.00M704.2 467.3l-3.50 7.00M735.1 467.3l-3.50 7.00M673.2 474.2l-3.50 7.00M643.2 480.1l-3.50 7.00M885.1 477.1l-3.50 7.00M856.1 486.2l-3.50 7.00M827.1 493.1l-0.50 8.00M801.3 507.1l-0.50 8.00M679.3 515.0l-3.50 7.00M705.1 513.3l-3.50 7.00M730.2 513.8l-3.50 7.00M310.2 543.3l-3.30 6.60M333.3 543.3l-3.30 6.60M356.4 541.4l-3.33 6.67M376.3 544.3l-3.28 6.56M303.0 585.4l-2.51 5.03M322.2 581.5l-2.59 5.17M340.4 582.4l-2.57 5.14M359.3 581.5l-2.59 5.17M293.2 620.3l-1.86 3.72M308.2 620.3l-1.86 3.72M324.2 616.4l-1.93 3.87M338.2 617.3l-1.92 3.83M269.1 657.4l-1.17 2.34M280.2 655.4l-1.21 2.41M294.2 650.0l-1.31 2.61M305.2 650.5l-1.30 2.59M316.3 650.5l-1.30 2.59M258.3 686.2l-0.63 1.26M268.1 682.2l-0.71 1.41M277.2 680.3l-0.74 1.48M286.3 679.3l-0.76 1.52M255.3 707.3l-0.24 0.47M261.2 705.3l-0.27 0.55M269.1 701.2l-0.35 0.70M472.1 554.4l-3.09 6.18M494.0 551.5l-3.15 6.29M516.1 551.5l-3.15 6.29M539.3 548.3l-3.21 6.41M471.2 595.5l-2.32 4.65M489.1 593.3l-2.37 4.73M508.0 589.3l-2.44 4.88M525.2 589.3l-2.44 4.88M466.3 633.3l-1.62 3.24M481.2 628.4l-1.71 3.42M498.2 628.4l-1.71 3.42M511.2 623.5l-1.80 3.60M459.1 664.5l-1.04 2.07M470.2 662.3l-1.08 2.15M482.2 657.4l-1.17 2.34M493.0 656.4l-1.19 2.37M443.1 696.2l-0.44 0.89M450.3 693.3l-0.50 1.00M459.1 688.4l-0.59 1.18M467.2 686.2l-0.63 1.26M476.1 684.2l-0.67 1.34M628.4 532.3l-3.50 7.00M653.3 525.4l-3.50 7.00M637.3 574.3l-2.72 5.44M658.2 564.5l-2.90 5.81M679.1 560.3l-2.98 5.96M701.2 559.3l-3.00 6.00M642.2 609.2l-2.07 4.14M658.2 605.3l-2.14 4.28M675.1 602.3l-2.20 4.39M694.1 596.4l-2.31 4.61M642.2 646.3l-1.38 2.75M655.2 642.4l-1.45 2.90M669.2 635.3l-1.58 3.16M683.3 634.3l-1.60 3.20M640.2 678.3l-0.78 1.56M650.3 671.4l-0.91 1.81M660.1 669.2l-0.95 1.90M672.2 663.3l-1.06 2.12M636.3 703.1l-0.32 0.63M643.2 699.2l-0.39 0.78M651.3 694.3l-0.48 0.96M658.2 692.3l-0.52 1.03M815.3 544.3l-0.47 7.50M838.1 536.2l-3.43 6.86M863.2 527.4l-3.50 7.00M888.0 523.4l-3.50 7.00M808.1 594.5l-0.33 5.35M826.1 585.4l-0.36 5.74M845.3 575.3l-2.70 5.40M865.2 570.4l-2.79 5.59M886.1 567.4l-2.85 5.70M818.2 630.4l-0.24 3.82M831.2 620.3l-1.86 3.72M847.2 614.1l-1.98 3.95M863.2 610.2l-2.05 4.10M823.1 661.3l-0.16 2.50M833.2 655.2l-0.17 2.76M845.3 650.3l-1.30 2.60M858.0 643.4l-1.43 2.86M825.1 691.3l-0.08 1.22M833.2 686.2l-0.63 1.26M841.1 679.3l-0.76 1.52M851.2 676.3l-0.82 1.63M836.2 706.3l-0.26 0.51M843.0 700.2l-0.37 0.74" stroke="#a8a8a8" stroke-width="1" fill="none"/>
<g fill="#1e8ff7"><rect x="301" y="40" width="5" height="5"/><rect x="276" y="94" width="5" height="5"/><rect x="542" y="85" width="5" height="5"/><rect x="538" y="94" width="5" height="5"/><rect x="511" y="97" width="5" height="5"/><rect x="439" y="106" width="5" height="5"/><rect x="464" y="113" width="5" height="5"/><rect x="511" y="120" width="5" height="5"/><rect x="329" y="134" width="5" height="5"/><rect x="422" y="137" width="5" height="5"/><rect x="453" y="134" width="5" height="5"/><rect x="494" y="146" width="5" height="5"/><rect x="511" y="143" width="5" height="5"/><rect x="484" y="156" width="5" height="5"/><rect x="403" y="162" width="5" height="5"/><rect x="413" y="159" width="5" height="5"/><rect x="289" y="187" width="5" height="5"/><rect x="376" y="185" width="5" height="5"/><rect x="404" y="181" width="5" height="5"/><rect x="486" y="192" width="5" height="5"/><rect x="456" y="199" width="5" height="5"/><rect x="543" y="193" width="5" height="5"/><rect x="572" y="177" width="5" height="5"/><rect x="571" y="189" width="5" height="5"/><rect x="368" y="207" width="5" height="5"/><rect x="537" y="216" width="5" height="5"/><rect x="335" y="235" width="5" height="5"/><rect x="361" y="230" width="5" height="5"/><rect x="439" y="236" width="5" height="5"/><rect x="548" y="235" width="5" height="5"/><rect x="530" y="239" width="5" height="5"/><rect x="505" y="245" width="5" height="5"/><rect x="330" y="257" width="5" height="5"/><rect x="427" y="253" width="5" height="5"/><rect x="500" y="268" width="5" height="5"/><rect x="429" y="270" width="5" height="5"/><rect x="807" y="80" width="5" height="5"/><rect x="708" y="102" width="5" height="5"/><rect x="701" y="105" width="5" height="5"/><rect x="604" y="120" width="5" height="5"/><rect x="627" y="119" width="5" height="5"/><rect x="679" y="116" width="5" height="5"/><rect x="587" y="143" width="5" height="5"/><rect x="591" y="150" width="5" height="5"/><rect x="617" y="141" width="5" height="5"/><rect x="680" y="139" width="5" height="5"/><rect x="771" y="136" width="5" height="5"/><rect x="579" y="166" width="5" height="5"/><rect x="660" y="157" width="5" height="5"/><rect x="681" y="161" width="5" height="5"/><rect x="656" y="176" width="5" height="5"/><rect x="745" y="175" width="5" height="5"/><rect x="828" y="171" width="5" height="5"/><rect x="742" y="194" width="5" height="5"/><rect x="738" y="198" width="5" height="5"/><rect x="659" y="199" width="5" height="5"/><rect x="711" y="203" width="5" height="5"/><rect x="627" y="212" width="5" height="5"/><rect x="663" y="222" width="5" height="5"/><rect x="706" y="226" width="5" height="5"/><rect x="798" y="226" width="5" height="5"/><rect x="609" y="242" width="5" height="5"/><rect x="642" y="238" width="5" height="5"/><rect x="702" y="249" width="5" height="5"/><rect x="722" y="253" width="5" height="5"/><rect x="677" y="256" width="5" height="5"/><rect x="647" y="261" width="5" height="5"/><rect x="600" y="268" width="5" height="5"/><rect x="849" y="268" width="5" height="5"/><rect x="873" y="260" width="5" height="5"/><rect x="396" y="283" width="5" height="5"/><rect x="465" y="289" width="5" height="5"/><rect x="324" y="304" width="5" height="5"/><rect x="370" y="300" width="5" height="5"/><rect x="415" y="305" width="5" height="5"/><rect x="451" y="319" width="5" height="5"/><rect x="497" y="314" width="5" height="5"/><rect x="543" y="309" width="5" height="5"/><rect x="558" y="304" width="5" height="5"/><rect x="335" y="350" width="5" height="5"/><rect x="376" y="352" width="5" height="5"/><rect x="416" y="352" width="5" height="5"/><rect x="454" y="359" width="5" height="5"/><rect x="470" y="368" width="5" height="5"/><rect x="510" y="360" width="5" height="5"/><rect x="551" y="360" width="5" height="5"/><rect x="304" y="401" width="5" height="5"/><rect x="341" y="401" width="5" height="5"/><rect x="378" y="399" width="5" height="5"/><rect x="412" y="404" width="5" height="5"/><rect x="444" y="410" width="5" height="5"/><rect x="483" y="411" width="5" height="5"/><rect x="519" y="410" width="5" height="5"/><rect x="555" y="406" width="5" height="5"/><rect x="311" y="450" width="5" height="5"/><rect x="343" y="446" width="5" height="5"/><rect x="374" y="449" width="5" height="5"/><rect x="403" y="453" width="5" height="5"/><rect x="460" y="464" width="5" height="5"/><rect x="491" y="460" width="5" height="5"/><rect x="523" y="454" width="5" height="5"/><rect x="554" y="456" width="5" height="5"/><rect x="313" y="492" width="5" height="5"/><rect x="340" y="494" width="5" height="5"/><rect x="366" y="496" width="5" height="5"/><rect x="392" y="496" width="5" height="5"/><rect x="468" y="509" width="5" height="5"/><rect x="495" y="502" width="5" height="5"/><rect x="521" y="502" width="5" height="5"/><rect x="547" y="503" width="5" height="5"/><rect x="652" y="277" width="5" height="5"/><rect x="603" y="286" width="5" height="5"/><rect x="874" y="284" width="5" height="5"/><rect x="826" y="291" width="5" height="5"/><rect x="779" y="302" width="5" height="5"/><rect x="588" y="311" width="5" height="5"/><rect x="716" y="318" width="5" height="5"/><rect x="737" y="321" width="5" height="5"/><rect x="672" y="326" width="5" height="5"/><rect x="627" y="333" width="5" height="5"/><rect x="891" y="328" width="5" height="5"/><rect x="847" y="338" width="5" height="5"/><rect x="584" y="344" width="5" height="5"/><rect x="804" y="347" width="5" height="5"/><rect x="591" y="358" width="5" height="5"/><rect x="764" y="360" width="5" height="5"/><rect x="687" y="370" width="5" height="5"/><rect x="727" y="369" width="5" height="5"/><rect x="647" y="380" width="5" height="5"/><rect x="728" y="381" width="5" height="5"/><rect x="864" y="381" width="5" height="5"/><rect x="608" y="389" width="5" height="5"/><rect x="826" y="393" width="5" height="5"/><rect x="788" y="404" width="5" height="5"/><rect x="590" y="410" width="5" height="5"/><rect x="733" y="414" width="5" height="5"/><rect x="697" y="419" width="5" height="5"/><rect x="755" y="418" width="5" height="5"/><rect x="662" y="423" width="5" height="5"/><rect x="628" y="435" width="5" height="5"/><rect x="877" y="430" width="5" height="5"/><rect x="842" y="435" width="5" height="5"/><rect x="810" y="448" width="5" height="5"/><rect x="583" y="459" width="5" height="5"/><rect x="780" y="460" width="5" height="5"/><rect x="703" y="463" width="5" height="5"/><rect x="734" y="463" width="5" height="5"/><rect x="672" y="470" width="5" height="5"/><rect x="642" y="476" width="5" height="5"/><rect x="884" y="473" width="5" height="5"/><rect x="855" y="482" width="5" height="5"/><rect x="826" y="489" width="5" height="5"/><rect x="800" y="503" width="5" height="5"/><rect x="678" y="510" width="5" height="5"/><rect x="704" y="509" width="5" height="5"/><rect x="729" y="509" width="5" height="5"/><rect x="309" y="539" width="5" height="5"/><rect x="332" y="539" width="5" height="5"/><rect x="355" y="537" width="5" height="5"/><rect x="375" y="540" width="5" height="5"/><rect x="302" y="581" width="5" height="5"/><rect x="321" y="577" width="5" height="5"/><rect x="339" y="578" width="5" height="5"/><rect x="358" y="577" width="5" height="5"/><rect x="292" y="616" width="5" height="5"/><rect x="307" y="616" width="5" height="5"/><rect x="323" y="612" width="5" height="5"/><rect x="337" y="613" width="5" height="5"/><rect x="268" y="653" width="5" height="5"/><rect x="279" y="651" width="5" height="5"/><rect x="293" y="646" width="5" height="5"/><rect x="304" y="646" width="5" height="5"/><rect x="315" y="646" width="5" height="5"/><rect x="257" y="682" width="5" height="5"/><rect x="267" y="678" width="5" height="5"/><rect x="276" y="676" width="5" height="5"/><rect x="285" y="675" width="5" height="5"/><rect x="248" y="705" width="5" height="5"/><rect x="254" y="703" width="5" height="5"/><rect x="260" y="701" width="5" height="5"/><rect x="268" y="697" width="5" height="5"/><rect x="238" y="724" width="5" height="5"/><rect x="242" y="722" width="5" height="5"/><rect x="247" y="718" width="5" height="5"/><rect x="252" y="716" width="5" height="5"/><rect x="240" y="730" width="5" height="5"/><rect x="234" y="733" width="5" height="5"/><rect x="230" y="738" width="5" height="5"/><rect x="228" y="741" width="5" height="5"/><rect x="236" y="726" width="5" height="5"/><rect x="232" y="736" width="5" height="5"/><rect x="228" y="740" width="5" height="5"/><rect x="471" y="550" width="5" height="5"/><rect x="492" y="547" width="5" height="5"/><rect x="515" y="547" width="5" height="5"/><rect x="538" y="544" width="5" height="5"/><rect x="470" y="591" width="5" height="5"/><rect x="488" y="589" width="5" height="5"/><rect x="506" y="585" width="5" height="5"/><rect x="524" y="585" width="5" height="5"/><rect x="465" y="629" width="5" height="5"/><rect x="480" y="624" width="5" height="5"/><rect x="497" y="624" width="5" height="5"/><rect x="510" y="619" width="5" height="5"/><rect x="458" y="660" width="5" height="5"/><rect x="469" y="658" width="5" height="5"/><rect x="481" y="653" width="5" height="5"/><rect x="492" y="652" width="5" height="5"/><rect x="442" y="692" width="5" height="5"/><rect x="449" y="689" width="5" height="5"/><rect x="458" y="684" width="5" height="5"/><rect x="466" y="682" width="5" height="5"/><rect x="475" y="680" width="5" height="5"/><rect x="435" y="715" width="5" height="5"/><rect x="441" y="710" width="5" height="5"/><rect x="446" y="708" width="5" height="5"/><rect x="452" y="706" width="5" height="5"/><rect x="441" y="723" width="5" height="5"/><rect x="436" y="726" width="5" height="5"/><rect x="431" y="731" width="5" height="5"/><rect x="429" y="736" width="5" height="5"/><rect x="426" y="741" width="5" height="5"/><rect x="433" y="728" width="5" height="5"/><rect x="428" y="738" width="5" height="5"/><rect x="627" y="528" width="5" height="5"/><rect x="652" y="521" width="5" height="5"/><rect x="636" y="570" width="5" height="5"/><rect x="657" y="560" width="5" height="5"/><rect x="678" y="556" width="5" height="5"/><rect x="700" y="555" width="5" height="5"/><rect x="641" y="605" width="5" height="5"/><rect x="657" y="601" width="5" height="5"/><rect x="674" y="598" width="5" height="5"/><rect x="693" y="592" width="5" height="5"/><rect x="641" y="642" width="5" height="5"/><rect x="654" y="638" width="5" height="5"/><rect x="668" y="631" width="5" height="5"/><rect x="682" y="630" width="5" height="5"/><rect x="639" y="674" width="5" height="5"/><rect x="649" y="667" width="5" height="5"/><rect x="659" y="665" width="5" height="5"/><rect x="671" y="659" width="5" height="5"/><rect x="629" y="705" width="5" height="5"/><rect x="635" y="699" width="5" height="5"/><rect x="642" y="695" width="5" height="5"/><rect x="650" y="690" width="5" height="5"/><rect x="657" y="688" width="5" height="5"/><rect x="627" y="723" width="5" height="5"/><rect x="630" y="719" width="5" height="5"/><rect x="635" y="716" width="5" height="5"/><rect x="640" y="713" width="5" height="5"/><rect x="631" y="731" width="5" height="5"/><rect x="627" y="734" width="5" height="5"/><rect x="625" y="738" width="5" height="5"/><rect x="623" y="743" width="5" height="5"/><rect x="628" y="732" width="5" height="5"/><rect x="624" y="740" width="5" height="5"/><rect x="814" y="540" width="5" height="5"/><rect x="837" y="532" width="5" height="5"/><rect x="862" y="523" width="5" height="5"/><rect x="886" y="519" width="5" height="5"/><rect x="807" y="590" width="5" height="5"/><rect x="825" y="581" width="5" height="5"/><rect x="844" y="571" width="5" height="5"/><rect x="864" y="566" width="5" height="5"/><rect x="885" y="563" width="5" height="5"/><rect x="817" y="626" width="5" height="5"/><rect x="830" y="616" width="5" height="5"/><rect x="846" y="610" width="5" height="5"/><rect x="862" y="606" width="5" height="5"/><rect x="822" y="657" width="5" height="5"/><rect x="832" y="651" width="5" height="5"/><rect x="844" y="646" width="5" height="5"/><rect x="856" y="639" width="5" height="5"/><rect x="824" y="687" width="5" height="5"/><rect x="832" y="682" width="5" height="5"/><rect x="840" y="675" width="5" height="5"/><rect x="850" y="672" width="5" height="5"/><rect x="824" y="711" width="5" height="5"/><rect x="829" y="705" width="5" height="5"/><rect x="835" y="702" width="5" height="5"/><rect x="842" y="696" width="5" height="5"/><rect x="833" y="718" width="5" height="5"/><rect x="828" y="723" width="5" height="5"/><rect x="824" y="727" width="5" height="5"/><rect x="822" y="733" width="5" height="5"/><rect x="822" y="738" width="5" height="5"/><rect x="822" y="743" width="5" height="5"/><rect x="822" y="730" width="5" height="5"/><rect x="822" y="735" width="5" height="5"/><rect x="822" y="740" width="5" height="5"/></g>
</svg>
<div class="t" style="left:230px;top:137px;font-size:11px;color:#3a8a3a;letter-spacing:0.5px">1y</div>
<div class="t" style="left:831px;top:735px;font-size:11px;color:#b84848">1x</div>
<div class="t" style="left:482px;top:378px;font-size:11px;color:#4a46d8;letter-spacing:0.9px">1000z</div>
<div class="t" style="left:479px;top:383px;font-size:11px;color:#4a46d8;letter-spacing:0.9px">100z</div>
<div class="t" style="left:444px;top:432px;font-size:11px;color:#4a46d8;letter-spacing:0.9px">10z</div>
<div class="t" style="left:320px;top:610px;font-size:10px;color:#5a50d0">1z</div>
<svg style="left:19px;top:738px" width="40" height="30"><line x1="2" y1="1" x2="2" y2="17" stroke="#3a9a3a" stroke-width="1.5"/><line x1="2" y1="18" x2="19" y2="18" stroke="#a84040" stroke-width="1.3"/></svg>
<div class="t" style="left:20px;top:730px;font-size:10px;color:#40b040">y</div>
<div class="t" style="left:39px;top:748px;font-size:10px;color:#e05050">x</div>
<div class="t" style="left:20px;top:748px;font-size:10px;color:#4a4aff">z</div>
</div>
<div class="a" style="left:963px;top:924px;width:957px;height:26px;background:#424242"></div>
<div class="a" style="left:963px;top:926px;width:9px;height:22px;background:#4e4e4e"></div>
<svg style="left:1152px;top:929px" width="16" height="16"><path d="M8 1V15M1 8H15" stroke="#e0e0e0" stroke-width="3.5"/></svg>
<svg style="left:1174px;top:929px" width="18" height="16"><path d="M1.5 7L9 1.5L16.5 7V14.5H1.5Z" fill="#ddd" stroke="#111" stroke-width="1.2"/><rect x="4" y="8" width="5" height="4" fill="#222"/></svg>
<svg style="left:1195px;top:929px" width="18" height="16"><path d="M16.5 1.5L2.5 8L16.5 14.5" fill="none" stroke="#111" stroke-width="1"/><circle cx="16.2" cy="1.7" r="1.2" fill="#111"/><circle cx="16.2" cy="14.3" r="1.2" fill="#111"/><circle cx="4" cy="8" r="1.5" fill="none" stroke="#111" stroke-width="0.9"/></svg>
<svg style="left:1219px;top:929px" width="24" height="16"><path d="M3 13H22L20.5 15H3Z" fill="#5e5e5e"/><path d="M4.5 12.5L7 3.5H15.5L18 12.5Z" fill="#d0d0d0" stroke="#111" stroke-width="1.2"/><path d="M10 4V12.5M13.2 4V12.5M6 8H17" stroke="#888" stroke-width="0.9"/><path d="M3 5V12.8H10" fill="none" stroke="#ff0000" stroke-width="2"/></svg>
<svg style="left:1244px;top:929px" width="16" height="17"><path d="M1.5 5L5 1.5H14.5V12L11 15.5H1.5Z" fill="#ccc" stroke="#111" stroke-width="1.2"/><path d="M1.5 5H11V15.5M11 5L14.5 1.5" fill="none" stroke="#111" stroke-width="1.2"/></svg>
<div class="a" style="left:1274px;top:934px;width:3px;height:9px;background:#dcdcdc"></div>
<div class="a" style="left:1274px;top:930px;width:3px;height:3px;background:#dcdcdc"></div>
<div class="a" style="left:1290px;top:927px;width:20px;height:21px;border:1px solid #9a9a9a"></div>
<svg style="left:1295px;top:934px" width="10" height="8"><path d="M1 1H9L5 7Z" fill="#111"/></svg>
<div class="a" style="left:1316px;top:927px;width:22px;height:21px;background:#c4c4c4"></div>
<svg style="left:1316px;top:927px" width="22" height="21"><path d="M1.5 7.5H7L8.5 5.5H14L15 7.5H19.5V18.5H1.5Z" fill="#505050" stroke="#0a0a0a" stroke-width="1.2"/><rect x="15.5" y="3.5" width="4" height="3" fill="#0a0a0a"/><circle cx="10.5" cy="13" r="3.8" fill="#d6d6d6" stroke="#0a0a0a" stroke-width="1.2"/></svg>
<div class="t txt" style="left:1345px;top:934px;color:#c8c8c8;letter-spacing:1px">Background TOP:</div>
<div class="a" style="left:1449px;top:928px;width:194px;height:20px;background:#b4b4b4"></div>
<div class="t txt" style="left:1649px;top:934px;color:#c8c8c8;letter-spacing:1px">Scale:</div>
<div class="a" style="left:1689px;top:928px;width:29px;height:20px;background:#b4b4b4"></div>
<div class="t txt" style="left:1691px;top:932px;color:#111;letter-spacing:0">1</div>
<svg style="left:1723px;top:927px" width="20" height="20"><path d="M10 1V7M7 4.5L10 8L13 4.5" fill="none" stroke="#111" stroke-width="1.8"/><path d="M1.5 17C4 13 16 13 18.5 17Z" fill="#e8e8e8" stroke="#111" stroke-width="1"/></svg>
<div class="a" style="left:0px;top:950px;width:1920px;height:67px;background:#303238"></div>
<div class="a" style="left:280px;top:950px;width:1640px;height:15px;background:#0d0d0d;border-top:1px solid #5a5a5a;border-bottom:1px solid #5a5a5a"></div>
<div class="t txt" style="left:281px;top:952px;color:#c0c0c0;letter-spacing:0.5px">1</div>
<div class="a" style="left:415px;top:951px;width:1px;height:13px;background:#6a6a6a"></div>
<div class="t txt" style="left:418px;top:952px;color:#c0c0c0;letter-spacing:0.5px">51</div>
<div class="a" style="left:552px;top:951px;width:1px;height:13px;background:#6a6a6a"></div>
<div class="t txt" style="left:555px;top:952px;color:#c0c0c0;letter-spacing:0.5px">101</div>
<div class="a" style="left:689px;top:951px;width:1px;height:13px;background:#6a6a6a"></div>
<div class="t txt" style="left:692px;top:952px;color:#c0c0c0;letter-spacing:0.5px">151</div>
<div class="a" style="left:826px;top:951px;width:1px;height:13px;background:#6a6a6a"></div>
<div class="t txt" style="left:829px;top:952px;color:#c0c0c0;letter-spacing:0.5px">201</div>
<div class="a" style="left:963px;top:951px;width:1px;height:13px;background:#6a6a6a"></div>
<div class="t txt" style="left:966px;top:952px;color:#c0c0c0;letter-spacing:0.5px">251</div>
<div class="a" style="left:1099px;top:951px;width:1px;height:13px;background:#6a6a6a"></div>
<div class="t txt" style="left:1102px;top:952px;color:#c0c0c0;letter-spacing:0.5px">301</div>
<div class="a" style="left:1236px;top:951px;width:1px;height:13px;background:#6a6a6a"></div>
<div class="t txt" style="left:1239px;top:952px;color:#c0c0c0;letter-spacing:0.5px">351</div>
<div class="a" style="left:1373px;top:951px;width:1px;height:13px;background:#6a6a6a"></div>
<div class="t txt" style="left:1376px;top:952px;color:#c0c0c0;letter-spacing:0.5px">401</div>
<div class="a" style="left:1510px;top:951px;width:1px;height:13px;background:#6a6a6a"></div>
<div class="t txt" style="left:1513px;top:952px;color:#c0c0c0;letter-spacing:0.5px">451</div>
<div class="a" style="left:1647px;top:951px;width:1px;height:13px;background:#6a6a6a"></div>
<div class="t txt" style="left:1650px;top:952px;color:#c0c0c0;letter-spacing:0.5px">501</div>
<div class="a" style="left:1784px;top:951px;width:1px;height:13px;background:#6a6a6a"></div>
<div class="t txt" style="left:1787px;top:952px;color:#c0c0c0;letter-spacing:0.5px">551</div>
<div class="a" style="left:1871px;top:951px;width:2px;height:13px;background:#6a88c0"></div>
<div class="t txt" style="left:1896px;top:952px;color:#c0c0c0;letter-spacing:0.5px">600</div>
<div class="a" style="left:280px;top:965px;width:1640px;height:11px;background:#303238"></div>
<div class="a" style="left:281px;top:966px;width:1636px;height:9px;background:#364a6e"></div>
<div class="a" style="left:281px;top:966px;width:21px;height:9px;background:#484848;border:1px solid #6a6a6a"></div>
<div class="a" style="left:289px;top:971px;width:1px;height:1px;background:#9a9a9a"></div>
<div class="a" style="left:292px;top:971px;width:1px;height:1px;background:#9a9a9a"></div>
<div class="a" style="left:295px;top:971px;width:1px;height:1px;background:#9a9a9a"></div>
<div class="a" style="left:1895px;top:966px;width:21px;height:9px;background:#484848;border:1px solid #6a6a6a"></div>
<div class="a" style="left:1903px;top:971px;width:1px;height:1px;background:#9a9a9a"></div>
<div class="a" style="left:1906px;top:971px;width:1px;height:1px;background:#9a9a9a"></div>
<div class="a" style="left:1909px;top:971px;width:1px;height:1px;background:#9a9a9a"></div>
<div class="a" style="left:280px;top:974px;width:1640px;height:1px;background:#0a0a0a"></div>
<div class="a" style="left:280px;top:975px;width:1640px;height:1px;background:#5a5a5a"></div>
<div class="a" style="left:0px;top:950px;width:280px;height:67px;background:#2d2f35;border:1px solid #6a6c70"></div>
<div class="a" style="left:4px;top:954px;width:272px;height:14px;background:#1c1d25;border:1px solid #6e7076"></div>
<div class="a" style="left:4px;top:968px;width:272px;height:49px;background:#0d0d17;border-left:1px solid #6e7076;border-right:1px solid #6e7076"></div>
<div class="t txt" style="left:10px;top:974px;color:#909cac;letter-spacing:1px">Start:</div>
<div class="t txt" style="left:70px;top:974px;color:#8fb0f8;letter-spacing:1px">1</div>
<div class="t txt" style="left:140px;top:974px;color:#909cac;letter-spacing:1px">End:</div>
<div class="t txt" style="left:200px;top:974px;color:#8fb0f8;letter-spacing:1px">600</div>
<div class="t txt" style="left:10px;top:989px;color:#909cac;letter-spacing:1px">RStart:</div>
<div class="t txt" style="left:70px;top:989px;color:#8fb0f8;letter-spacing:1px">1</div>
<div class="t txt" style="left:140px;top:989px;color:#909cac;letter-spacing:1px">REnd:</div>
<div class="t txt" style="left:200px;top:989px;color:#8fb0f8;letter-spacing:1px">600</div>
<div class="t txt" style="left:10px;top:1004px;color:#909cac;letter-spacing:1px">FPS:</div>
<div class="t txt" style="left:70px;top:1004px;color:#8fb0f8;letter-spacing:1px">60.0</div>
<div class="t txt" style="left:140px;top:1004px;color:#909cac;letter-spacing:1px">Tempo:</div>
<div class="t txt" style="left:200px;top:1004px;color:#8fb0f8;letter-spacing:1px">120.0</div>
<div class="btn" style="left:282px;top:978px;width:39px;height:39px;background:#363941;border-color:#5a5a5a"><svg style="left:16px;top:15px" width="6" height="10"><path d="M0.5 0.5H4.5M2.5 0.5V7.5M0.5 7.5H4.5" stroke="#7e8088" stroke-width="1"/></svg></div>
<div class="btn" style="left:324px;top:978px;width:67px;height:17px;background:#363941"><div class="a" style="left:1px;top:1px;width:63px;height:13px;background:#c8874a"></div><div class="t txt" style="left:0;width:65px;text-align:center;top:3px;color:#3a1008;letter-spacing:0.5px">TimeCode</div></div>
<div class="btn" style="left:324px;top:997px;width:67px;height:20px;"><div class="t txt" style="left:0;width:65px;text-align:center;top:5px;letter-spacing:1px">Beats</div></div>
<div class="a" style="left:394px;top:978px;width:200px;height:39px;background:#000;border:1px solid #5a5a5a"></div>
<div class="t " style="left:414px;top:986px;font-size:26px;color:#7da7f5;letter-spacing:2.2px">00:00:09.41</div>
<div class="a" style="left:596px;top:978px;width:135px;height:39px;background:#000;border:1px solid #5a5a5a"></div>
<div class="t " style="left:639px;top:986px;font-size:26px;color:#7da7f5;letter-spacing:2px">582</div>
<div class="btn" style="left:733px;top:978px;width:39px;height:39px;border-color:#5a5a5a;"><svg style="left:11px;top:15px" width="14" height="11"><rect x="0" y="0.5" width="2" height="9" fill="#b8c0d8"/><path d="M2 5L6.5 0.5V9.5Z M6.5 5L11 0.5V9.5Z" fill="#b8c0d8"/></svg></div>
<div class="btn" style="left:774px;top:978px;width:39px;height:39px;border-color:#5a5a5a;"><svg style="left:13px;top:15px" width="8" height="11"><rect x="0" y="0.5" width="2.2" height="9" fill="#b8c0d8"/><rect x="3.6" y="0.5" width="2.2" height="9" fill="#b8c0d8"/></svg></div>
<div class="btn" style="left:815px;top:978px;width:39px;height:39px;border-color:#5a5a5a;"><svg style="left:11px;top:16px" width="8" height="9"><path d="M5 0L0.5 3.8L5 7.6Z" fill="#b8c0d8"/></svg></div>
<div class="btn" style="left:856px;top:978px;width:39px;height:39px;border-color:#5a5a5a;background:#363941"><div class="a" style="left:1px;top:1px;width:35px;height:35px;background:#c4834a"></div><svg style="left:13px;top:16px" width="8" height="9"><path d="M0 0L4.8 4L0 8Z" fill="#3a0806"/></svg></div>
<div class="btn" style="left:897px;top:978px;width:39px;height:39px;border-color:#5a5a5a;"><div class="a" style="left:16px;top:19px;width:5px;height:1.5px;background:#b8c0d8"></div></div>
<div class="btn" style="left:938px;top:978px;width:39px;height:39px;border-color:#5a5a5a;"><svg style="left:13px;top:15px" width="11" height="11"><path d="M4.6 0V9.5M0 4.8H9.5" stroke="#b8c0d8" stroke-width="1.3"/></svg></div>
<div class="t txt" style="left:989px;top:982px;letter-spacing:1px">Range Limit</div>
<div class="btn" style="left:980px;top:999px;width:43px;height:18px;background:#363941"><div class="a" style="left:1px;top:1px;width:39px;height:16px;background:#c8874a"></div><div class="t txt" style="left:0;width:41px;text-align:center;top:4px;color:#3a1008;letter-spacing:1px">Loop</div></div>
<div class="btn" style="left:1024px;top:999px;width:45px;height:18px;"><div class="t txt" style="left:0;width:43px;text-align:center;top:4px;letter-spacing:1px">Once</div></div>
<div class="a" style="left:0px;top:23px;width:1px;height:994px;background:#55575c"></div></body></html>
